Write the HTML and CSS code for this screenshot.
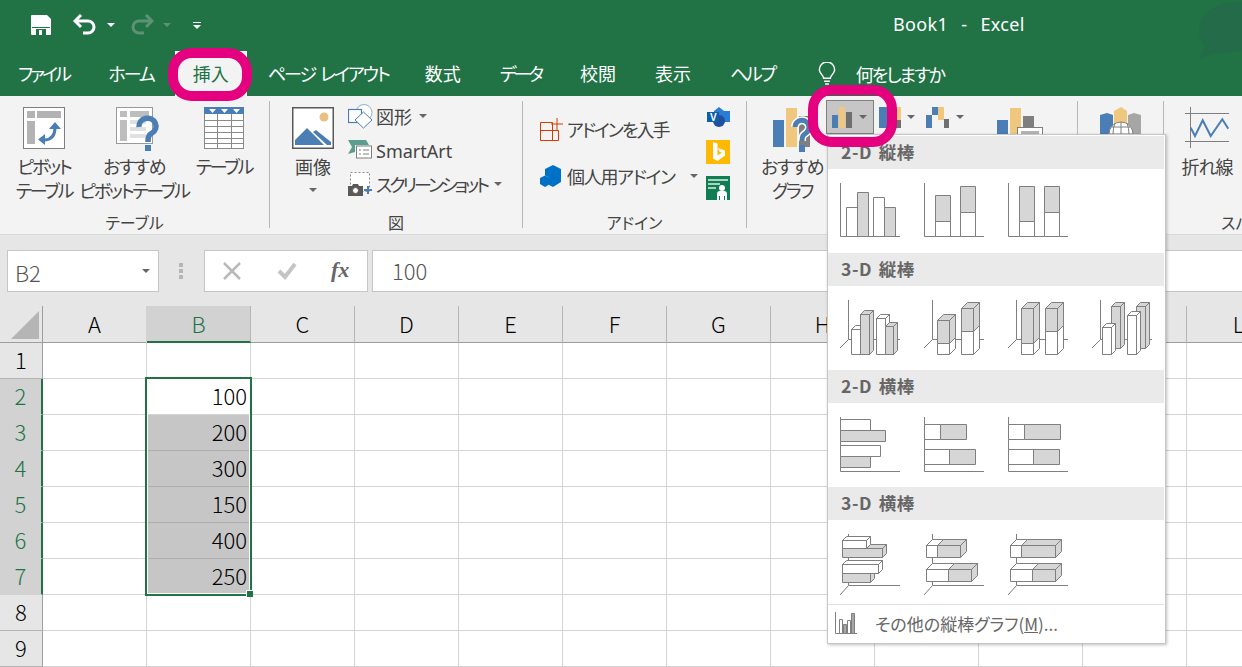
FILE: index.html
```html
<!DOCTYPE html>
<html lang="ja">
<head>
<meta charset="utf-8">
<title>Book1 - Excel</title>
<link rel="stylesheet" href="styles.css">
</head>
<body>
<div class="app">
  <header class="titlebar">
    <svg class="watermark" viewBox="0 0 43 58"><path d="M43 0C20 0 0 8 0 29c0 6 2 11 6 15-2 4-5 9-6 14 6-4 18-7 43-9z"/></svg>
    <div class="qat">
      <svg class="qi-save" width="20" height="20" viewBox="0 0 20 20"><path class="wf" d="M1 0h15l4 4v15a1 1 0 0 1-1 1H1a1 1 0 0 1-1-1V1a1 1 0 0 1 1-1z"/><path class="gf" d="M1 12h18v1H1zM5 14h10v6H5z"/><path class="wf" d="M8 15h3v5H8z"/></svg>
      <svg class="qi-undo" width="24" height="22" viewBox="0 0 24 22"><path class="ws" d="M8 1L2 7l6 6M2 7h13a6 6 0 0 1 0 12h-5"/></svg>
      <span class="caret caret-w qc-undo"></span>
      <svg class="qi-redo" width="24" height="22" viewBox="0 0 24 22"><path class="ds" d="M16 1l6 6-6 6M22 7H9a6 6 0 0 0 0 12h5"/></svg>
      <span class="caret caret-d qc-redo"></span>
      <span class="customize"><i></i><span class="caret caret-w"></span></span>
      <div class="doc-title">Book1&nbsp; -&nbsp; Excel</div>
    </div>
    <nav class="tabs">
      <span class="tab kana t-file">ファイル</span>
      <span class="tab kana">ホーム</span>
      <span class="tab active">挿入<span class="ring"></span></span>
      <span class="tab kana t-page">ページ レイアウト</span>
      <span class="tab">数式</span>
      <span class="tab kana t-data">データ</span>
      <span class="tab">校閲</span>
      <span class="tab">表示</span>
      <span class="tab kana t-help">ヘルプ</span>
      <span class="tell">
        <svg width="18" height="23" viewBox="0 0 18 24"><path class="bulb" d="M5.500 17c0-3-4.500-5-4.500-9a8 8 0 0 1 16 0c0 4-4.500 6-4.500 9zM6 20h6M7 23h4"/></svg>
        <span class="tell-text">何をしますか</span>
      </span>
    </nav>
  </header>

  <section class="ribbon">
    <div class="group g-table">
      <div class="g-body">
        <div class="big b-pivot">
          <svg width="42" height="42" viewBox="0 0 42 42"><rect x=".5" y=".5" width="41" height="41" fill="#fff" stroke="#7f7f7f"/><path fill="#b3b3b3" d="M4 4h8v7H4zM14 4h24v7H14zM4 14h8v23H4z"/><path fill="none" stroke="#4a7eb5" stroke-width="3" d="M22 33q10-1 10-12"/><path fill="#4a7eb5" d="M26 22l6-7 6 7zM22 27v11l-7-5.500z"/></svg>
          <span class="lbl k2">ピボット<br>テーブル</span>
        </div>
        <div class="big b-rec">
          <svg width="44" height="46" viewBox="0 0 44 46"><rect x=".5" y=".5" width="36" height="36" fill="#fff" stroke="#999"/><path fill="#bdbdbd" d="M4 4h7v6H4zM14 4h19v6H14zM4 13h7v21H4z"/><path fill="#e0e0e0" d="M14 13h16v4H14zM14 20h16v4H14zM14 27h16v4H14z"/><path fill="none" stroke="#4a7eb5" stroke-width="5.500" d="M23 20a8.500 8 0 1 1 13 6c-3 2-4 3-4 9"/><path fill="#4a7eb5" d="M29 38h6v6h-6z"/></svg>
          <span class="lbl"><span class="k1">おすすめ</span><br><span class="k2">ピボットテーブル</span></span>
        </div>
        <div class="big b-table">
          <svg width="41" height="42" viewBox="0 0 41 42"><rect x=".5" y=".5" width="39" height="41" fill="#fff" stroke="#8a8a8a"/><path fill="#4a7eb5" d="M0 0h40v7H0z"/><path fill="#fff" d="M5 2h7l-3.500 4zM17 2h7l-3.500 4zM29 2h7l-3.500 4z"/><path fill="none" stroke="#8a8a8a" d="M0 13.500h40M0 19.500h40M0 25.500h40M0 31.500h40M0 36.500h40M13.500 7v35M27.500 7v35"/></svg>
          <span class="lbl k2">テーブル</span>
        </div>
      </div>
      <div class="g-title">テーブル</div>
    </div>

    <div class="group g-illus">
      <div class="g-body">
        <div class="big b-pic">
          <svg width="42" height="42" viewBox="0 0 42 42"><rect x=".75" y=".75" width="40.500" height="40.500" fill="#fff" stroke="#595959" stroke-width="1.500"/><circle cx="32" cy="10" r="4.500" fill="#e9c07f"/><path fill="#4a7eb5" d="M3 38v-5l12-12 17 17zM24 23l15 12v3h-4L21 25z"/></svg>
          <span class="lbl">画像</span>
          <span class="caret big-caret"></span>
        </div>
        <div class="small-col">
          <div class="row-s"><svg width="25" height="25" viewBox="0 0 25 25"><circle cx="16" cy="8.500" r="8" fill="#fff" stroke="#8ab0d6"/><rect x=".5" y="5.500" width="13" height="13" fill="#fff" stroke="#4a7eb5" stroke-width="1.200"/><path d="M15.500 8l8.500 8-8.500 8L7 16z" fill="#fff" stroke="#4a7eb5"/></svg><span>図形</span><span class="caret c-shape"></span></div>
          <div class="row-s"><svg width="25" height="20" viewBox="0 0 25 20"><path fill="#5a9e8f" d="M0 0h18l3 5H7v7l-7 2 4-7z"/><rect x="8.500" y="6" width="15" height="12" fill="#fff" stroke="#7f7f7f"/><path stroke="#7f7f7f" d="M11 10h2M15 10h6M11 14h2M15 14h6"/></svg><span class="latin">SmartArt</span></div>
          <div class="row-s"><svg width="25" height="24" viewBox="0 0 25 24"><rect x="2.500" y=".5" width="19" height="19" fill="#fff" stroke="#8a8a8a" stroke-dasharray="2 2"/><path fill="#595959" d="M0 14h4l1-2h5l1 2h4v10H0z"/><circle cx="7.500" cy="18.500" r="3" fill="#fff" stroke="#595959"/><path stroke="#4a7eb5" stroke-width="2" d="M16 18h8M20 14v8"/></svg><span class="k3">スクリーンショット</span><span class="caret c-shot"></span></div>
        </div>
      </div>
      <div class="g-title">図</div>
    </div>

    <div class="group g-addin">
      <div class="g-body">
        <div class="addin-col">
          <div class="row-a a-get"><svg width="24" height="23" viewBox="0 0 24 23"><path fill="none" stroke="#d83b01" d="M.5 4.500H12.500V22.500M.5 4.500v18h18V12.500H.5"/><path fill="none" stroke="#d83b01" d="M11 6h12M17 0v12"/></svg><span class="k-get">アドインを入手</span></div>
          <div class="row-a"><svg width="21" height="22" viewBox="0 0 21 22"><path fill="#0072c6" d="M13 0l8 4v13l-8 5-8-4V4z"/><path fill="#fff" d="M4 10l5 2.500v7L4 22l-1-.5V12z"/><path fill="#0072c6" d="M5 10.500l5 2.500v6l-5 3-5-3v-6z"/></svg><span class="k-own">個人用アドイン</span><span class="caret c-addin"></span></div>
        </div>
        <div class="store-col">
          <svg width="23" height="21" viewBox="0 0 23 21"><path fill="#2b7cd3" d="M7 4l5-4 5 4h6v11H17l-5 2-5-2z"/><circle cx="12" cy="14" r="6" fill="#1e4fa0"/><path fill="#0f5ea8" d="M0 5h12v10H0z"/><text class="v-mark" x="3" y="13.500">V</text></svg>
          <svg width="24" height="24" viewBox="0 0 24 24"><rect width="24" height="24" fill="#ffb900"/><path fill="#fff" d="M7 2l4.500 1.500v12l4.500-2.700-2.700-1.300-1.300-3.500 7 2.500v5L11.500 21 7 18.500z"/></svg>
          <svg width="24" height="24" viewBox="0 0 24 24"><rect width="24" height="24" fill="#107c54"/><path fill="#a6d4bf" d="M2 3h20v2H2zM2 7h12v2H2zM2 11h8v2H2z"/><circle cx="16" cy="12" r="3" fill="#fff"/><path fill="#fff" d="M11 24v-6q0-3 3-3h4q3 0 3 3v6h-2v-4h-1v4h-4v-4h-1v4z"/></svg>
        </div>
      </div>
      <div class="g-title">アドイン</div>
    </div>

    <div class="group g-chart">
      <div class="g-body">
        <div class="big b-recchart">
          <svg width="40" height="46" viewBox="0 0 40 46"><path fill="#4a7eb5" d="M0 13h11v27H0z"/><path fill="#efc77f" d="M13 1h11v39H13z"/><path fill="#7f7f7f" d="M26 9h11v31H26z"/><path fill="none" stroke="#fff" stroke-width="8" d="M22 20a7 7 0 1 1 11 6c-3 2-4 3-4 8"/><path fill="none" stroke="#4a7eb5" stroke-width="5" d="M22 20a7 7 0 1 1 11 6c-3 2-4 3-4 8"/><path fill="#4a7eb5" d="M26 38h6v7h-6z"/></svg>
          <span class="lbl"><span class="k1">おすすめ</span><br><span class="k2">グラフ</span></span>
        </div>
        <div class="chart-btn">
          <svg width="20" height="21" viewBox="0 0 20 21"><path fill="#4a7eb5" d="M0 8h6v13H0z"/><path fill="#efc77f" d="M7 0h6v21H7z"/><path fill="#6f6f6f" d="M14 5h6v16h-6z"/></svg>
          <span class="caret"></span>
          <span class="ring"></span>
        </div>
        <div class="chart-ico ci-bar">
          <svg width="22" height="21" viewBox="0 0 22 21"><path fill="#4a7eb5" d="M0 0h11v21H0z"/><path fill="#efc77f" d="M11 0h11v13H11z"/><path fill="#6f6f6f" d="M11 13h11v8H11z"/></svg>
          <span class="caret"></span>
        </div>
        <div class="chart-ico ci-water">
          <svg width="24" height="21" viewBox="0 0 24 21"><path fill="#4a7eb5" d="M0 8h6v13H0zM6 0h6v8H6z"/><path fill="#efc77f" d="M12 0h6v13h-6z"/><path fill="#6f6f6f" d="M18 12h5v9h-5z"/></svg>
          <span class="caret"></span>
        </div>
        <div class="pivotchart">
          <svg width="46" height="32" viewBox="0 0 46 32"><path fill="#4a7eb5" d="M0 13h11v19H0z"/><path fill="#efc77f" d="M13 1h11v31H13z"/><path fill="#7f7f7f" d="M26 9h11v23H26z"/><rect x="20.500" y="20.500" width="25" height="11" fill="#fff" stroke="#7f7f7f"/><rect x="24" y="24" width="18" height="8" fill="#b3b3b3"/></svg>
        </div>
      </div>
    </div>

    <div class="group g-map">
      <div class="g-body">
        <svg class="map-ico" width="42" height="36" viewBox="0 0 42 36"><path fill="#4a7eb5" d="M0 8l7-2 6 2v28H0z"/><path fill="#efc77f" d="M14 4l7-4 6 4v32H14z"/><path fill="#a6a6a6" d="M28 8l6-2 7 2v28H28z"/><circle cx="21" cy="27" r="12" fill="#fff" stroke="#7f7f7f"/><path fill="none" stroke="#7f7f7f" d="M9 27h24M21 15v24M12 20h18M15 16q-4 11 0 22M27 16q4 11 0 22"/></svg>
      </div>
    </div>

    <div class="group g-spark">
      <div class="g-body">
        <div class="big b-line">
          <svg width="44" height="42" viewBox="0 0 44 42"><path fill="none" stroke="#7f7f7f" d="M0 6.500h44M0 34.500h44M5.500 0v41"/><path fill="none" stroke="#4a7eb5" stroke-width="2" d="M5.700 20.700l4.300 8.300 7.700-15.700 8 15.700 11.600-16.700 6 9.400"/></svg>
          <span class="lbl k-line">折れ線</span>
        </div>
      </div>
      <div class="g-title g-title-left">スパークライン</div>
    </div>
  </section>

  <section class="formula">
    <div class="namebox"><span class="nb-text">B2</span><span class="caret"></span></div>
    <div class="grip"><i></i><i></i><i></i></div>
    <div class="fbtns">
      <svg width="20" height="20" viewBox="0 0 20 20"><path stroke="#b9b9b9" stroke-width="2.500" d="M2 2l16 16M18 2L2 18"/></svg>
      <svg width="20" height="18" viewBox="0 0 20 18"><path fill="none" stroke="#c4c4c4" stroke-width="4" d="M2 9l6 6L18 2"/></svg>
      <span class="fx">fx</span>
    </div>
    <div class="finput">100</div>
  </section>

  <main class="sheet">
    <div class="corner"><i></i></div>
    <div class="ch">A</div><div class="ch on">B</div><div class="ch">C</div><div class="ch">D</div><div class="ch">E</div><div class="ch">F</div><div class="ch">G</div><div class="ch">H</div><div class="ch">I</div><div class="ch">J</div><div class="ch">K</div><div class="ch">L</div>

    <div class="rh">1</div><div class="c"></div><div class="c"></div><div class="c"></div><div class="c"></div><div class="c"></div><div class="c"></div><div class="c"></div><div class="c"></div><div class="c"></div><div class="c"></div><div class="c"></div><div class="c"></div>
    <div class="rh on">2</div><div class="c"></div><div class="c">100</div><div class="c"></div><div class="c"></div><div class="c"></div><div class="c"></div><div class="c"></div><div class="c"></div><div class="c"></div><div class="c"></div><div class="c"></div><div class="c"></div>
    <div class="rh on">3</div><div class="c"></div><div class="c sel">200</div><div class="c"></div><div class="c"></div><div class="c"></div><div class="c"></div><div class="c"></div><div class="c"></div><div class="c"></div><div class="c"></div><div class="c"></div><div class="c"></div>
    <div class="rh on">4</div><div class="c"></div><div class="c sel">300</div><div class="c"></div><div class="c"></div><div class="c"></div><div class="c"></div><div class="c"></div><div class="c"></div><div class="c"></div><div class="c"></div><div class="c"></div><div class="c"></div>
    <div class="rh on">5</div><div class="c"></div><div class="c sel">150</div><div class="c"></div><div class="c"></div><div class="c"></div><div class="c"></div><div class="c"></div><div class="c"></div><div class="c"></div><div class="c"></div><div class="c"></div><div class="c"></div>
    <div class="rh on">6</div><div class="c"></div><div class="c sel">400</div><div class="c"></div><div class="c"></div><div class="c"></div><div class="c"></div><div class="c"></div><div class="c"></div><div class="c"></div><div class="c"></div><div class="c"></div><div class="c"></div>
    <div class="rh on">7</div><div class="c"></div><div class="c sel">250</div><div class="c"></div><div class="c"></div><div class="c"></div><div class="c"></div><div class="c"></div><div class="c"></div><div class="c"></div><div class="c"></div><div class="c"></div><div class="c"></div>
    <div class="rh">8</div><div class="c"></div><div class="c"></div><div class="c"></div><div class="c"></div><div class="c"></div><div class="c"></div><div class="c"></div><div class="c"></div><div class="c"></div><div class="c"></div><div class="c"></div><div class="c"></div>
    <div class="rh">9</div><div class="c"></div><div class="c"></div><div class="c"></div><div class="c"></div><div class="c"></div><div class="c"></div><div class="c"></div><div class="c"></div><div class="c"></div><div class="c"></div><div class="c"></div><div class="c"></div>

    <div class="selection"><i></i></div>
  </main>

  <aside class="menu">
    <div class="m-head">2-D 縦棒</div>
    <div class="m-items">
      <svg class="ci" viewBox="0 0 60 62"><path class="n" d="M.5 0v53.500H60"/><path d="M6.500 24.500h11v29h-11z"/><path class="g" d="M17.500 9.500h11v44h-11z"/><path d="M33.500 14.500h11v39h-11z"/><path class="g" d="M44.500 24.500h11v29h-11z"/></svg>
      <svg class="ci" viewBox="0 0 60 62"><path class="n" d="M.5 0v53.500H60"/><path d="M11.500 38.500h15v15h-15z"/><path class="g" d="M11.500 12.500h15v26h-15z"/><path d="M36.500 29.500h15v24h-15z"/><path class="g" d="M36.500 3.500h15v26h-15z"/></svg>
      <svg class="ci" viewBox="0 0 60 62"><path class="n" d="M.5 0v53.500H60"/><path d="M11.500 38.500h15v15h-15z"/><path class="g" d="M11.500 3.500h15v35h-15z"/><path d="M36.500 29.500h15v24h-15z"/><path class="g" d="M36.500 3.500h15v26h-15z"/></svg>
    </div>
    <div class="m-head">3-D 縦棒</div>
    <div class="m-items">
      <svg class="ci" viewBox="0 0 60 62"><path class="n" d="M8.500 0v39.500H60M8.500 39.500L0 48"/><path d="M11.500 29.500h9v25h-9zM11.500 29.500l4-4h9l-4 4z"/><path class="g" d="M20.500 14.500h9v40h-9zM20.500 14.500l4-4h9l-4 4zM29.500 14.500l4-4v40l-4 4z"/><path d="M36.500 18.500h9v36h-9zM36.500 18.500l4-4h9l-4 4zM45.500 18.500l4-4v36l-4 4z"/><path class="g" d="M45.500 26.500h8v28h-8zM45.500 26.500l4-4h8l-4 4zM53.500 26.500l4-4v28l-4 4z"/></svg>
      <svg class="ci" viewBox="0 0 60 62"><path class="n" d="M8.500 0v39.500H60M8.500 39.500L0 48"/><path d="M13.500 43.500h12v11h-12zM25.500 43.500l6-6v11l-6 6z"/><path class="g" d="M13.500 20.500h12v23h-12zM13.500 20.500l6-6h12l-6 6zM25.500 20.500l6-6v23l-6 6z"/><path d="M37.500 31.500h12v23h-12zM49.500 31.500l6-6v23l-6 6z"/><path class="g" d="M37.500 8.500h12v23h-12zM37.500 8.500l6-6h12l-6 6zM49.500 8.500l6-6v23l-6 6z"/></svg>
      <svg class="ci" viewBox="0 0 60 62"><path class="n" d="M8.500 0v39.500H60M8.500 39.500L0 48"/><path d="M13.500 43.500h12v11h-12zM25.500 43.500l6-6v11l-6 6z"/><path class="g" d="M13.500 8.500h12v35h-12zM13.500 8.500l6-6h12l-6 6zM25.500 8.500l6-6v35l-6 6z"/><path d="M37.500 31.500h12v23h-12zM49.500 31.500l6-6v23l-6 6z"/><path class="g" d="M37.500 8.500h12v23h-12zM37.500 8.500l6-6h12l-6 6zM49.500 8.500l6-6v23l-6 6z"/></svg>
      <svg class="ci" viewBox="0 0 60 62"><path class="n" d="M8.500 0v39.500H60M8.500 39.500L0 48"/><path class="g" d="M19.500 6.500h9v42h-9zM19.500 6.500l4-4h9l-4 4zM28.500 6.500l4-4v42l-4 4z"/><path class="g" d="M44.500 6.500h9v42h-9zM44.500 6.500l4-4h9l-4 4zM53.500 6.500l4-4v42l-4 4z"/><path d="M10.500 27.500h9v27h-9zM10.500 27.500l4-4h9l-4 4zM19.500 27.500l4-4v27l-4 4z"/><path d="M35.500 15.500h9v39h-9zM35.500 15.500l4-4h9l-4 4zM44.500 15.500l4-4v39l-4 4z"/></svg>
    </div>
    <div class="m-head">2-D 横棒</div>
    <div class="m-items">
      <svg class="ci" viewBox="0 0 60 62"><path class="n" d="M.5 0v54.500H60"/><path d="M.5 2.500h30v11H.5z"/><path class="g" d="M.5 13.500h45v11H.5z"/><path d="M.5 28.500h40v11H.5z"/><path class="g" d="M.5 39.500h30v11H.5z"/></svg>
      <svg class="ci" viewBox="0 0 60 62"><path class="n" d="M.5 0v54.500H60"/><path d="M.5 7.500h16v15H.5z"/><path class="g" d="M16.500 7.500h26v15h-26z"/><path d="M.5 32.500h25v15H.5z"/><path class="g" d="M25.500 32.500h26v15h-26z"/></svg>
      <svg class="ci" viewBox="0 0 60 62"><path class="n" d="M.5 0v54.500H60"/><path d="M.5 7.500h16v15H.5z"/><path class="g" d="M16.500 7.500h36v15h-36z"/><path d="M.5 32.500h25v15H.5z"/><path class="g" d="M25.500 32.500h26v15h-26z"/></svg>
    </div>
    <div class="m-head">3-D 横棒</div>
    <div class="m-items">
      <svg class="ci" viewBox="0 0 60 62"><path class="n" d="M8.500 0v51.500H60M8.500 51.500L0 61"/><path class="g" d="M2.500 14.500h40v9h-40zM26.500 14.500l4-4h16l-4 4zM42.500 14.500l4-4v9l-4 4z"/><path d="M2.500 6.500h24v8h-24zM2.500 6.500l4-4h24l-4 4zM26.500 6.500l4-4v8l-4 4z"/><path class="g" d="M2.500 39.500h28v9h-28zM30.500 39.500l4-4v9l-4 4z"/><path d="M2.500 30.500h36v9h-36zM2.500 30.500l4-4h36l-4 4zM38.500 30.500l4-4v9l-4 4z"/></svg>
      <svg class="ci" viewBox="0 0 60 62"><path class="n" d="M8.500 0v51.500H60M8.500 51.500L0 61"/><path d="M2.500 11.500h11v12h-11zM2.500 11.500l6-6h11l-6 6z"/><path class="g" d="M13.500 11.500h23v12h-23zM13.500 11.500l6-6h23l-6 6zM36.500 11.500l6-6v12l-6 6z"/><path d="M2.500 35.500h22v12h-22zM2.500 35.500l6-6h22l-6 6z"/><path class="g" d="M24.500 35.500h23v12h-23zM24.500 35.500l6-6h23l-6 6zM47.500 35.500l6-6v12l-6 6z"/></svg>
      <svg class="ci" viewBox="0 0 60 62"><path class="n" d="M8.500 0v51.500H60M8.500 51.500L0 61"/><path d="M2.500 11.500h11v12h-11zM2.500 11.500l6-6h11l-6 6z"/><path class="g" d="M13.500 11.500h34v12h-34zM13.500 11.500l6-6h34l-6 6zM47.500 11.500l6-6v12l-6 6z"/><path d="M2.500 35.500h22v12h-22zM2.500 35.500l6-6h22l-6 6z"/><path class="g" d="M24.500 35.500h23v12h-23zM24.500 35.500l6-6h23l-6 6zM47.500 35.500l6-6v12l-6 6z"/></svg>
    </div>
    <div class="m-foot">
      <svg width="22" height="22" viewBox="0 0 22 22"><path fill="none" stroke="#7f7f7f" d="M.5 0v21.500H22"/><path fill="#fff" stroke="#7f7f7f" d="M4.500 7.500h3v14h-3z"/><path fill="#a6a6a6" stroke="#7f7f7f" d="M8.500 12.500h3v9h-3z"/><path fill="#fff" stroke="#7f7f7f" d="M12.500 8.500h3v13h-3z"/><path fill="#a6a6a6" stroke="#7f7f7f" d="M16.500 1.500h3v20h-3z"/></svg>
      <span>その他の縦棒グラフ(<u>M</u>)...</span>
    </div>
  </aside>
</div>
</body>
</html>
```

FILE: styles.css
```css
* { box-sizing: border-box; }
html, body { margin: 0; padding: 0; height: 100%; overflow: hidden; background: #fff; }
body { font-family: "Noto Sans CJK JP", "Noto Sans", sans-serif; font-feature-settings: "palt"; color: #444; }
svg { display: block; flex: none; }
.app { position: relative; width: 1242px; height: 667px; overflow: hidden; display: flex; flex-direction: column; }

/* carets */
.caret { display: inline-block; width: 0; height: 0; border-left: 4px solid transparent; border-right: 4px solid transparent; border-top: 4px solid #666; flex: none; }
.caret-w { border-top-color: #fff; }
.caret-d { border-top-color: #5d9277; }

/* title bar */
.titlebar { position: relative; height: 96px; background: #217346; color: #fff; flex: none; }
.watermark { position: absolute; right: 0; top: 2px; width: 43px; height: 58px; fill: #236b49; }
.qat { height: 50px; display: flex; align-items: center; padding-left: 31px; }
.wf { fill: #fff; }
.gf { fill: #217346; }
.ws { fill: none; stroke: #fff; stroke-width: 3; }
.ds { fill: none; stroke: #5d9277; stroke-width: 3; }
.qi-undo { margin-left: 22px; }
.qc-undo { margin-left: 10px; }
.qi-redo { margin-left: 15px; }
.qc-redo { margin-left: 9px; }
.customize { margin-left: 22px; width: 8px; display: flex; flex-direction: column; gap: 2px; }
.customize i { display: block; height: 1px; background: #fff; }
.doc-title { margin: 0 0 3px 692px; font-size: 18px; font-family: "Noto Sans", sans-serif; word-spacing: 1.500px; letter-spacing: .35px; white-space: nowrap; line-height: 1; }
.tabs { height: 46px; display: flex; align-items: flex-end; padding-left: 18px; gap: 39px; font-size: 18px; }
.tab { height: 45px; line-height: 44px; white-space: nowrap; position: relative; }
.tab.kana { letter-spacing: -2px; }
.tab.t-file { letter-spacing: -2.750px; }
.tab.t-page { word-spacing: 3px; margin-right: -3px; }
.tab.t-data { letter-spacing: -3px; }
.tab.t-help { letter-spacing: -2.300px; }
.tab.active { background: #f3f3f3; color: #217346; padding: 0 18px; margin: 0 -18px; }
.ring { position: absolute; border: 10px solid #e4007f; border-radius: 24px; z-index: 20; }
.tab .ring { left: -7px; right: -5px; top: -3px; bottom: -5px; }
.tell { display: flex; align-items: center; height: 45px; gap: 20px; margin-left: 4px; white-space: nowrap; }
.tell-text { letter-spacing: -2px; }
.bulb { fill: none; stroke: #fff; stroke-width: 1.500; }

/* ribbon */
.ribbon { height: 139px; padding-top: 5px; background: #f3f3f3; border-bottom: 1px solid #d8d8d8; display: flex; flex: none; font-size: 18px; }
.group { height: 127px; border-right: 1px solid #b8b8b8; display: flex; flex-direction: column; flex: none; }
.g-table { width: 270px; }
.g-illus { width: 253px; }
.g-addin { width: 224px; }
.g-chart { width: 331px; }
.g-map { width: 86px; }
.g-spark { width: 100px; border-right: 0; }
.g-body { flex: 1; display: flex; min-height: 0; }
.g-title { height: 24px; line-height: 24px; margin-bottom: -6px; text-align: center; white-space: nowrap; font-size: 16px; }
.g-title-left { text-align: left; padding-left: 57px; }
.big { display: flex; flex-direction: column; align-items: center; padding-top: 6px; text-align: center; flex: none; }
.lbl { margin-top: 5px; line-height: 24px; white-space: nowrap; }
.k1 { letter-spacing: -1.500px; }
.k2 { letter-spacing: -2.300px; }
.k3 { letter-spacing: -3px; }
.k-get { letter-spacing: -2px; }
.k-own { letter-spacing: -1.300px; }
.k-line { letter-spacing: -1px; }
.latin { font-family: "Noto Sans", sans-serif; margin-top: 2px; }
.b-pivot { width: 60px; margin-left: 14px; }
.b-rec { width: 110px; margin-left: 5px; }
.b-rec svg { margin: 0 0 -4px 8px; }
.b-table { width: 70px; }
.b-pic { width: 64px; margin-left: 11px; }
.big-caret { margin-top: 10px; }
.small-col { margin-left: 3px; margin-top: -2px; display: flex; flex-direction: column; }
.row-s { height: 34px; display: flex; align-items: center; gap: 3px; white-space: nowrap; }
.c-shape { margin-left: 4px; }
.c-shot { margin-left: 4px; }
.addin-col { margin-left: 17px; margin-top: 16px; display: flex; flex-direction: column; gap: 23px; width: 167px; }
.row-a { display: flex; align-items: center; height: 24px; gap: 6px; white-space: nowrap; }
.a-get { gap: 3px; }
.c-addin { margin-left: 9px; }
.store-col { display: flex; flex-direction: column; gap: 12px; margin-top: 6px; margin-left: -1px; }
.store-col svg:first-child { margin-left: 1px; }
.v-mark { fill: #fff; font-family: "Liberation Sans", sans-serif; font-weight: 700; font-size: 10px; }
.b-recchart { width: 60px; margin-left: 15px; }
.b-recchart svg { margin: 0 0 -4px 1px; }
.chart-btn { position: relative; margin-left: 4px; margin-top: -1px; width: 48px; height: 34px; background: #c6c6c6; border: 1px solid #808080; display: flex; align-items: center; padding-left: 5px; gap: 7px; flex: none; }
.chart-btn .ring { left: -19px; right: -24px; top: -16px; bottom: -14px; }
.chart-ico { display: flex; align-items: center; height: 34px; margin-top: -1px; flex: none; gap: 6px; }
.ci-bar { margin-left: 5px; }
.ci-water { margin-left: 11px; gap: 6px; }
.pivotchart { margin-left: 33px; padding-top: 6px; }
.map-ico { margin: 6px 0 0 22px; }
.b-line { width: 52px; margin-left: 17px; }

/* formula bar */
.formula { height: 71px; padding-top: 15px; background: #e6e6e6; display: flex; align-items: flex-start; flex: none; }
.namebox { margin-left: 7px; width: 152px; height: 42px; background: #fff; border: 1px solid #c6c6c6; display: flex; align-items: center; justify-content: space-between; padding: 0 8px 0 7px; font-size: 22px; font-weight: 300; color: #555; }
.nb-text { padding-top: 2px; }
.grip { width: 4px; margin: 13px 0 0 20px; display: flex; flex-direction: column; gap: 2px; }
.grip i { display: block; height: 4px; background: #b5b5b5; }
.fbtns { margin-left: 21px; width: 164px; height: 42px; background: #fff; border: 1px solid #c6c6c6; display: flex; align-items: center; padding: 0 16px 0 17px; justify-content: space-between; }
.fx { font-family: "Liberation Serif", serif; font-style: italic; font-weight: 700; font-size: 22px; color: #666; width: 20px; margin-bottom: 2px; font-feature-settings: normal; }
.finput { margin-left: 4px; flex: 1; height: 42px; background: #fff; border: 1px solid #c6c6c6; border-right: 0; line-height: 38px; padding-left: 19px; font-size: 22px; font-weight: 300; color: #555; }

/* sheet */
.sheet { position: relative; flex: 1; display: grid; grid-template-columns: 43px repeat(12, 104px); grid-template-rows: 37px repeat(9, 36px); font-size: 22px; font-weight: 300; color: #000; background: #fff; }
.corner { background: #e6e6e6; border-right: 1px solid #9e9e9e; border-bottom: 1px solid #9e9e9e; display: flex; justify-content: flex-end; align-items: flex-end; padding: 0 3px 3px 0; }
.corner i { display: block; width: 28px; height: 28px; background: #b5b5b5; clip-path: polygon(100% 0, 100% 100%, 0 100%); }
.ch { background: #e6e6e6; border-right: 1px solid #b5b5b5; border-bottom: 1px solid #9e9e9e; text-align: center; line-height: 34px; }
.ch.on { background: #d2d2d2; color: #217346; border-bottom: 2px solid #217346; box-shadow: -1px 0 0 #d2d2d2; }
.rh { background: #e6e6e6; border-right: 1px solid #9e9e9e; border-bottom: 1px solid #b5b5b5; text-align: center; line-height: 33px; }
.rh.on { background: #d2d2d2; color: #217346; border-right: 2px solid #217346; border-bottom-color: #d2d2d2; }
.c { border-right: 1px solid #d4d4d4; border-bottom: 1px solid #d4d4d4; text-align: right; padding-right: 3px; line-height: 33px; min-width: 0; }
.c.sel { background: #c6c6c6; border-bottom-color: #aeaeae; }
.selection { position: absolute; left: 145px; top: 71px; width: 107px; height: 219px; border: 2px solid #217346; box-shadow: inset 0 0 0 1px #fff; }
.selection i { position: absolute; right: -3px; bottom: -3px; width: 7px; height: 7px; background: #217346; border: 1px solid #fff; border-width: 1px 0 0 1px; }

/* dropdown menu */
.menu { position: absolute; left: 827px; top: 134px; width: 339px; height: 510px; background: #fff; border: 1px solid #c6c6c6; padding: 1px 1px 0 0; box-shadow: 1px 1px 3px rgba(0,0,0,.25); z-index: 10; }
.m-head { height: 33px; background: #eaeaea; padding-left: 13px; line-height: 32px; font-size: 17.500px; font-weight: 700; color: #666; letter-spacing: .6px; word-spacing: 2px; white-space: nowrap; }
.m-items { height: 84px; padding: 14px 0 0 12px; display: flex; gap: 24px; }
.ci { width: 60px; height: 62px; fill: #fff; stroke: #7f7f7f; stroke-width: 1; }
.ci .g { fill: #d6d6d6; }
.ci .n { fill: none; }
.m-foot { height: 39px; padding-bottom: 2px; border-top: 1px solid #e0e0e0; display: flex; align-items: center; padding-left: 7px; gap: 18px; font-size: 17px; color: #666; white-space: nowrap; }
```
